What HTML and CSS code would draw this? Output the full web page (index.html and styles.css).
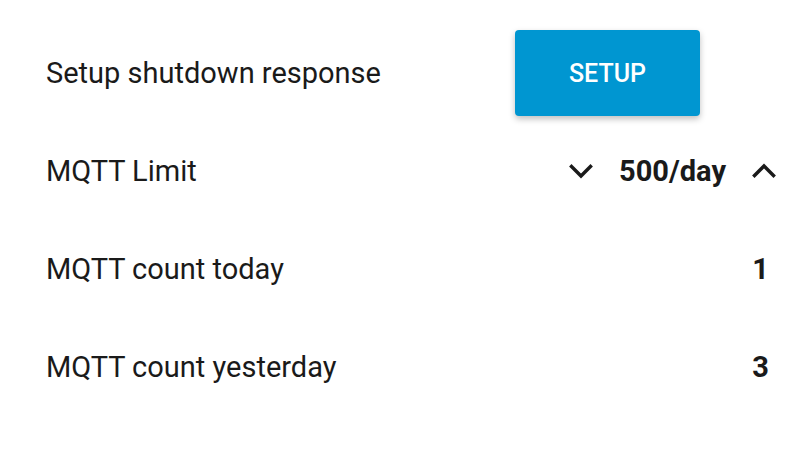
FILE: index.html
```html
<!DOCTYPE html>
<html>
<head>
<meta charset="utf-8">
<link rel="stylesheet" href="styles.css">
</head>
<body>
<div class="list">
  <div class="row">
    <span class="label">Setup shutdown response</span>
    <button class="btn">SETUP</button>
  </div>
  <div class="row">
    <span class="label">MQTT Limit</span>
    <div class="stepper">
      <svg class="chev" viewBox="0 0 24 16" width="24" height="16"><polyline points="2.5,3.5 12,13 21.5,3.5"/></svg>
      <span class="value">500/day</span>
      <svg class="chev" viewBox="0 0 24 16" width="24" height="16"><polyline points="2.5,12.5 12,3 21.5,12.5"/></svg>
    </div>
  </div>
  <div class="row">
    <span class="label">MQTT count today</span>
    <span class="value">1</span>
  </div>
  <div class="row">
    <span class="label">MQTT count yesterday</span>
    <span class="value">3</span>
  </div>
</div>
</body>
</html>
```
FILE: styles.css
```css
html, body {
  margin: 0;
  padding: 0;
  background: #ffffff;
}
body {
  font-family: Roboto, "Noto Sans", sans-serif;
  color: #1a1a1a;
}
.list {
  display: flex;
  flex-direction: column;
  padding: 24px 31px 0 46px;
}
.row {
  height: 98px;
  display: flex;
  align-items: center;
  justify-content: space-between;
}
.label {
  font-size: 29px;
}
.value {
  font-size: 29px;
  font-weight: 700;
}
.btn {
  width: 185px;
  height: 86px;
  margin-right: 69px;
  border: none;
  border-radius: 4px;
  background: #0096d1;
  color: #ffffff;
  font-family: Roboto, sans-serif;
  font-size: 25px;
  font-weight: 500;
  box-shadow: 0 3px 6px rgba(0,0,0,0.25);
}
.stepper {
  display: flex;
  align-items: center;
  gap: 26px;
  margin-right: -7px;
}
.chev {
  fill: none;
  stroke: #1a1a1a;
  stroke-width: 3.4;
  stroke-linecap: square;
  stroke-linejoin: miter;
}
```
